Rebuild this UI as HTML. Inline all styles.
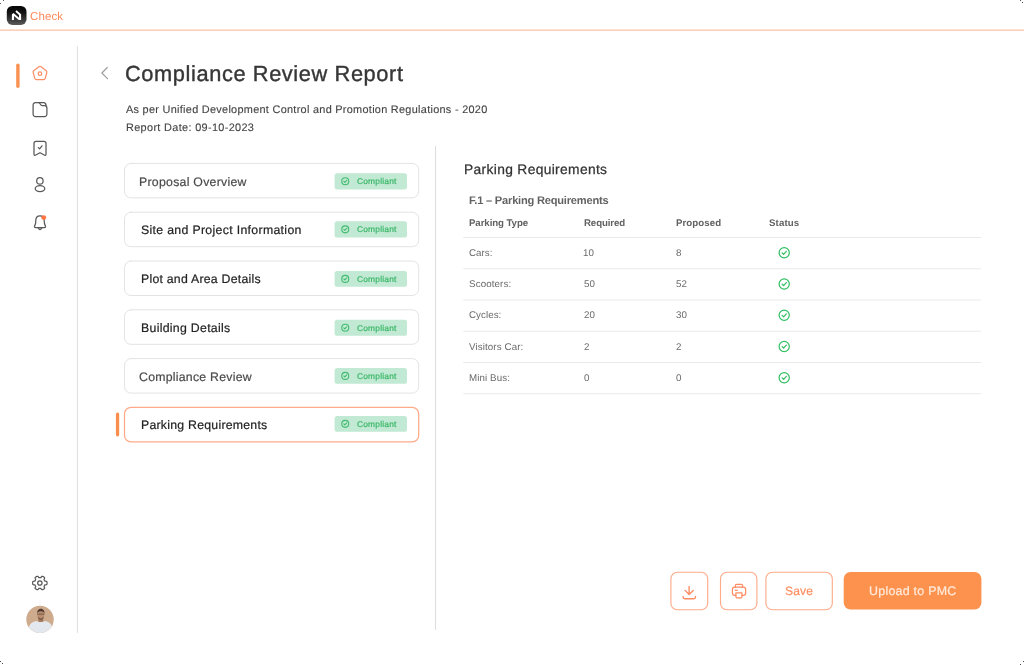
<!DOCTYPE html>
<html lang="en"><head><meta charset="utf-8"><title>Compliance Review Report</title>
<style>
*{box-sizing:border-box;margin:0;padding:0}
html,body{width:1024px;height:665px;overflow:hidden;background:#fff}
body{position:relative;font-family:"Liberation Sans",sans-serif}
.t{position:absolute;white-space:nowrap;font-family:"Liberation Sans",sans-serif}
.a{position:absolute}
svg{overflow:visible}
.t{will-change:transform;text-rendering:geometricPrecision}

#t_check{left:30.00px;top:12.00px;font-size:11.5px;line-height:11.5px;font-weight:400;color:#ff8a5c;letter-spacing:0.130px}
#t_title{left:125.30px;top:63.00px;font-size:21.8px;line-height:21.8px;font-weight:400;color:#363636;letter-spacing:0.604px;-webkit-text-stroke:0.38px #363636}
#t_sub1{left:125.65px;top:105.00px;font-size:10.9px;line-height:10.9px;font-weight:400;color:#444;letter-spacing:0.291px;-webkit-text-stroke:0.12px #444}
#t_sub2{left:125.65px;top:123.00px;font-size:10.9px;line-height:10.9px;font-weight:400;color:#444;letter-spacing:0.337px;-webkit-text-stroke:0.12px #444}
#t_l1{left:139.21px;top:176.00px;font-size:12.3px;line-height:12.3px;font-weight:400;color:#4a4a4a;letter-spacing:0.269px;-webkit-text-stroke:0.2px #4a4a4a}
#t_l2{left:141.04px;top:224.00px;font-size:12.3px;line-height:12.3px;font-weight:400;color:#222;letter-spacing:0.321px;-webkit-text-stroke:0.2px #222}
#t_l3{left:141.04px;top:273.00px;font-size:12.3px;line-height:12.3px;font-weight:400;color:#222;letter-spacing:0.238px;-webkit-text-stroke:0.2px #222}
#t_l4{left:141.38px;top:322.00px;font-size:12.3px;line-height:12.3px;font-weight:400;color:#222;letter-spacing:0.296px;-webkit-text-stroke:0.2px #222}
#t_l5{left:139.21px;top:371.00px;font-size:12.3px;line-height:12.3px;font-weight:400;color:#4a4a4a;letter-spacing:0.246px;-webkit-text-stroke:0.2px #4a4a4a}
#t_l6{left:141.38px;top:419.00px;font-size:12.3px;line-height:12.3px;font-weight:400;color:#222;letter-spacing:0.242px;-webkit-text-stroke:0.2px #222}
#t_h2{left:464.36px;top:163.00px;font-size:13.8px;line-height:13.8px;font-weight:400;color:#333;letter-spacing:0.341px;-webkit-text-stroke:0.25px #333}
#t_h3{left:469.00px;top:196.00px;font-size:11.1px;line-height:11.1px;font-weight:700;color:#626262;letter-spacing:-0.210px}
#t_c1{left:469.00px;top:219.00px;font-size:9.7px;line-height:9.7px;font-weight:700;color:#626262;letter-spacing:-0.093px}
#t_c2{left:584.00px;top:219.00px;font-size:9.7px;line-height:9.7px;font-weight:700;color:#626262;letter-spacing:-0.124px}
#t_c3{left:676.21px;top:219.00px;font-size:9.7px;line-height:9.7px;font-weight:700;color:#626262;letter-spacing:0.059px}
#t_c4{left:769.40px;top:219.00px;font-size:9.7px;line-height:9.7px;font-weight:700;color:#626262;letter-spacing:0.109px}
#t_save{left:785.30px;top:585.00px;font-size:12.1px;line-height:12.1px;font-weight:400;color:#ff8f63;letter-spacing:0.134px;-webkit-text-stroke:0.2px #ff8f63}
#t_upl{left:869.20px;top:585.00px;font-size:12.4px;line-height:12.4px;font-weight:400;color:#ffeadb;letter-spacing:0.270px;-webkit-text-stroke:0.2px #ffeadb}
#t_r0a{left:468.90px;top:249.00px;font-size:9.75px;line-height:9.75px;font-weight:400;color:#6a6a6a;letter-spacing:0.026px}
#t_r0b{left:583.00px;top:249.00px;font-size:9.75px;line-height:9.75px;font-weight:400;color:#6a6a6a;letter-spacing:0.000px}
#t_r0c{left:676.21px;top:249.00px;font-size:9.75px;line-height:9.75px;font-weight:400;color:#6a6a6a;letter-spacing:0.000px}
#t_r1a{left:468.90px;top:280.00px;font-size:9.75px;line-height:9.75px;font-weight:400;color:#6a6a6a;letter-spacing:0.127px}
#t_r1b{left:584.40px;top:280.00px;font-size:9.75px;line-height:9.75px;font-weight:400;color:#6a6a6a;letter-spacing:0.000px}
#t_r1c{left:676.21px;top:280.00px;font-size:9.75px;line-height:9.75px;font-weight:400;color:#6a6a6a;letter-spacing:0.000px}
#t_r2a{left:468.90px;top:311.00px;font-size:9.75px;line-height:9.75px;font-weight:400;color:#6a6a6a;letter-spacing:0.055px}
#t_r2b{left:584.40px;top:311.00px;font-size:9.75px;line-height:9.75px;font-weight:400;color:#6a6a6a;letter-spacing:0.000px}
#t_r2c{left:676.21px;top:311.00px;font-size:9.75px;line-height:9.75px;font-weight:400;color:#6a6a6a;letter-spacing:0.000px}
#t_r3a{left:468.90px;top:343.00px;font-size:9.75px;line-height:9.75px;font-weight:400;color:#6a6a6a;letter-spacing:0.109px}
#t_r3b{left:584.40px;top:343.00px;font-size:9.75px;line-height:9.75px;font-weight:400;color:#6a6a6a;letter-spacing:0.000px}
#t_r3c{left:676.21px;top:343.00px;font-size:9.75px;line-height:9.75px;font-weight:400;color:#6a6a6a;letter-spacing:0.000px}
#t_r4a{left:468.90px;top:374.00px;font-size:9.75px;line-height:9.75px;font-weight:400;color:#6a6a6a;letter-spacing:0.100px}
#t_r4b{left:584.40px;top:374.00px;font-size:9.75px;line-height:9.75px;font-weight:400;color:#6a6a6a;letter-spacing:0.000px}
#t_r4c{left:676.21px;top:374.00px;font-size:9.75px;line-height:9.75px;font-weight:400;color:#6a6a6a;letter-spacing:0.000px}
#t_b0{left:357.38px;top:177.00px;font-size:8.4px;line-height:8.4px;font-weight:400;color:#38b565;letter-spacing:0.205px;-webkit-text-stroke:0.18px #38b565}
#t_b1{left:357.38px;top:225.00px;font-size:8.4px;line-height:8.4px;font-weight:400;color:#38b565;letter-spacing:0.205px;-webkit-text-stroke:0.18px #38b565}
#t_b2{left:357.38px;top:275.00px;font-size:8.4px;line-height:8.4px;font-weight:400;color:#38b565;letter-spacing:0.205px;-webkit-text-stroke:0.18px #38b565}
#t_b3{left:357.38px;top:324.00px;font-size:8.4px;line-height:8.4px;font-weight:400;color:#38b565;letter-spacing:0.205px;-webkit-text-stroke:0.18px #38b565}
#t_b4{left:357.38px;top:372.00px;font-size:8.4px;line-height:8.4px;font-weight:400;color:#38b565;letter-spacing:0.205px;-webkit-text-stroke:0.18px #38b565}
#t_b5{left:357.38px;top:420.00px;font-size:8.4px;line-height:8.4px;font-weight:400;color:#38b565;letter-spacing:0.205px;-webkit-text-stroke:0.18px #38b565}
</style></head>
<body>
<svg class="a" style="left:0;top:0" width="1024" height="665" viewBox="0 0 1024 665" fill="none" stroke-linecap="round" stroke-linejoin="round">
<defs><linearGradient id="lg" x1="0" y1="0" x2="0" y2="1"><stop offset="0" stop-color="#030303"/><stop offset="0.4" stop-color="#161616"/><stop offset="1" stop-color="#5a5a5a"/></linearGradient><clipPath id="av"><circle cx="40" cy="619.4" r="13.7"/></clipPath></defs>
<g fill="#4a4a4a" stroke="none"><rect x="3" y="0" width="1" height="0.9"/><rect x="0" y="3" width="1" height="0.9"/><rect x="1020" y="0" width="1" height="0.9"/><rect x="1022" y="2" width="1" height="1"/><rect x="1023" y="661" width="1" height="1"/><rect x="1020" y="664" width="1" height="1"/><rect x="0" y="661" width="1" height="1"/><rect x="2" y="663" width="1" height="1"/></g>
<rect x="6.8" y="5.9" width="19.7" height="19" rx="5.6" fill="url(#lg)"/>
<path d="M11.9 19.9 V14.3 L13.5 13.0 L19.0 17.8 V15.0 L15.4 11.7 L16.6 10.2 L21.1 14.3 V19.9 H18.7 L14 15.9 V19.9 Z" fill="#fff"/>
<rect x="0" y="29.55" width="1024" height="1.15" fill="#fdbc9e"/>
<rect x="76.85" y="46" width="1.1" height="587" fill="#e3e0e0"/>
<rect x="16.2" y="63.5" width="3.4" height="24.5" rx="1.7" fill="#fb9150"/>
<g stroke="#ff8f66" stroke-width="1.25">
<path d="M38.9 66.8 Q40 66 41.1 66.8 L46 70.5 Q47.1 71.3 46.8 72.6 L45.3 78.2 Q44.9 79.5 43.5 79.5 H36.5 Q35.1 79.5 34.7 78.2 L33.2 72.6 Q32.9 71.3 34 70.5 Z"/>
<circle cx="39.95" cy="73.65" r="1.75"/></g>
<g stroke="#585858" stroke-width="1.25">
<path d="M35.6 102.6 H38.6 C40.3 102.6 40.2 105.6 42.2 105.6 H44.6 A2.3 2.3 0 0 1 46.9 107.9 V114.3 A2.3 2.3 0 0 1 44.6 116.6 H35.4 A2.3 2.3 0 0 1 33.1 114.3 V105 A2.4 2.4 0 0 1 35.6 102.6 Z"/>
<path d="M38.6 102.6 H43.6 C45.4 102.6 46 103.9 46 105.7"/>
<path d="M34 143.4 A2.1 2.1 0 0 1 36.1 141.3 H43.9 A2.1 2.1 0 0 1 46 143.4 V153.9 Q46 155.9 44.2 155 L40 152.7 L35.8 155 Q34 155.9 34 153.9 Z"/>
<path d="M38.3 147.6 L39.6 148.8 L42 145.8"/>
<circle cx="39.9" cy="180.9" r="3.2"/><ellipse cx="40" cy="188.6" rx="4.8" ry="3.1"/>
<path d="M40 215.9 C37 215.9 35.8 218 35.8 220.6 C35.8 223.2 35.5 224.6 34.8 225.6 C34.1 226.6 34.5 227.7 35.7 227.7 H44.3 C45.5 227.7 45.9 226.6 45.2 225.6 C44.5 224.6 44.2 223.2 44.2 220.6 C44.2 218 43 215.9 40 215.9 Z"/>
<path d="M38.3 228.2 Q40 230.9 41.7 228.2"/>
<path d="M47.05 583.00L47.05 583.19L47.04 583.38L47.03 583.56L47.01 583.75L46.98 583.94L46.94 584.12L46.88 584.30L46.78 584.47L46.59 584.62L46.26 584.72L45.80 584.76L45.36 584.79L45.05 584.84L44.87 584.93L44.76 585.03L44.68 585.15L44.61 585.27L44.54 585.39L44.47 585.51L44.41 585.63L44.34 585.75L44.26 585.87L44.19 585.99L44.13 586.11L44.07 586.24L44.03 586.39L44.05 586.58L44.15 586.88L44.35 587.27L44.54 587.69L44.62 588.03L44.59 588.27L44.49 588.44L44.37 588.58L44.23 588.70L44.08 588.82L43.93 588.93L43.77 589.04L43.61 589.14L43.45 589.24L43.29 589.33L43.12 589.41L42.95 589.50L42.78 589.57L42.60 589.64L42.42 589.70L42.24 589.74L42.04 589.74L41.82 589.65L41.57 589.41L41.30 589.03L41.05 588.66L40.86 588.43L40.69 588.31L40.54 588.27L40.40 588.26L40.26 588.25L40.13 588.26L39.99 588.26L39.85 588.26L39.71 588.26L39.57 588.26L39.44 588.25L39.30 588.26L39.16 588.27L39.01 588.31L38.84 588.43L38.65 588.66L38.40 589.03L38.13 589.41L37.88 589.65L37.66 589.74L37.46 589.74L37.28 589.70L37.10 589.64L36.92 589.57L36.75 589.50L36.58 589.41L36.41 589.33L36.25 589.24L36.09 589.14L35.93 589.04L35.77 588.93L35.62 588.82L35.47 588.70L35.33 588.58L35.21 588.44L35.11 588.27L35.08 588.03L35.16 587.69L35.35 587.27L35.55 586.88L35.65 586.58L35.67 586.39L35.63 586.24L35.57 586.11L35.51 585.99L35.44 585.87L35.36 585.75L35.29 585.63L35.23 585.51L35.16 585.39L35.09 585.27L35.02 585.15L34.94 585.03L34.83 584.93L34.65 584.84L34.34 584.79L33.90 584.76L33.44 584.72L33.11 584.62L32.92 584.47L32.82 584.30L32.76 584.12L32.72 583.94L32.69 583.75L32.67 583.56L32.66 583.38L32.65 583.19L32.65 583.00L32.65 582.81L32.66 582.62L32.67 582.44L32.69 582.25L32.72 582.06L32.76 581.88L32.82 581.70L32.92 581.53L33.11 581.38L33.44 581.28L33.90 581.24L34.34 581.21L34.65 581.16L34.83 581.07L34.94 580.97L35.02 580.85L35.09 580.73L35.16 580.61L35.23 580.49L35.29 580.37L35.36 580.25L35.44 580.13L35.51 580.01L35.57 579.89L35.63 579.76L35.67 579.61L35.65 579.42L35.55 579.12L35.35 578.73L35.16 578.31L35.08 577.97L35.11 577.73L35.21 577.56L35.33 577.42L35.47 577.30L35.62 577.18L35.77 577.07L35.93 576.96L36.09 576.86L36.25 576.76L36.41 576.67L36.58 576.59L36.75 576.50L36.92 576.43L37.10 576.36L37.28 576.30L37.46 576.26L37.66 576.26L37.88 576.35L38.13 576.59L38.40 576.97L38.65 577.34L38.84 577.57L39.01 577.69L39.16 577.73L39.30 577.74L39.44 577.75L39.57 577.74L39.71 577.74L39.85 577.74L39.99 577.74L40.13 577.74L40.26 577.75L40.40 577.74L40.54 577.73L40.69 577.69L40.86 577.57L41.05 577.34L41.30 576.97L41.57 576.59L41.82 576.35L42.04 576.26L42.24 576.26L42.42 576.30L42.60 576.36L42.78 576.43L42.95 576.50L43.12 576.59L43.29 576.67L43.45 576.76L43.61 576.86L43.77 576.96L43.93 577.07L44.08 577.18L44.23 577.30L44.37 577.42L44.49 577.56L44.59 577.73L44.62 577.97L44.54 578.31L44.35 578.73L44.15 579.12L44.05 579.42L44.03 579.61L44.07 579.76L44.13 579.89L44.19 580.01L44.26 580.13L44.34 580.25L44.41 580.37L44.47 580.49L44.54 580.61L44.61 580.73L44.68 580.85L44.76 580.97L44.87 581.07L45.05 581.16L45.36 581.21L45.80 581.24L46.26 581.28L46.59 581.38L46.78 581.53L46.88 581.70L46.94 581.88L46.98 582.06L47.01 582.25L47.03 582.44L47.04 582.62L47.05 582.81Z"/><circle cx="39.85" cy="583.0" r="2.2"/>
</g>
<circle cx="43.7" cy="217.6" r="2.45" fill="#ff7541"/>
<g clip-path="url(#av)">
<rect x="26" y="605" width="28" height="29" fill="#cfab8d"/>
<path d="M27.8 634 C27.8 625.6 30.6 622.4 36.2 621.1 Q40.6 622.9 45 621.1 C50.8 622.4 53 625.6 53 634 Z" fill="#e3e8ee"/>
<path d="M38.3 617.5 H43.3 V621.2 Q40.8 623 38.3 621.2 Z" fill="#a67b5f"/>
<ellipse cx="40.8" cy="614.4" rx="3.6" ry="4.9" fill="#b88d70"/>
<path d="M37.1 613.4 C36.5 607.3 45.1 607.3 44.5 613.4 C43.7 610.6 37.9 610.6 37.1 613.4 Z" fill="#4e3a2e"/>
<path d="M37.6 614.1 H44" stroke="#5a4538" stroke-width="0.7"/>
<path d="M37.6 616.6 Q40.8 620.2 44 616.6 Q43.6 619.6 40.8 620.2 Q38 619.6 37.6 616.6 Z" fill="#7b5b48"/>
</g>
<path d="M107.3 67.5 L101.9 73 L107.5 78.7" stroke="#9e9e9e" stroke-width="1.2"/>
<rect x="434.95" y="146" width="1.1" height="483.8" fill="#dedede"/>
<rect x="124.5" y="163.40" width="294.2" height="34.5" rx="6.5" stroke="#e3e3e3" stroke-width="1"/>
<rect x="334.6" y="173.15" width="72.4" height="16.25" rx="2.6" fill="#c1e9d4"/>
<g stroke="#41bb6e" stroke-width="1.1"><circle cx="345.25" cy="181.28" r="3.5"/><path d="M343.85 181.38 L344.85 182.33 L346.75 180.28"/></g>
<rect x="124.5" y="212.20" width="294.2" height="34.5" rx="6.5" stroke="#e3e3e3" stroke-width="1"/>
<rect x="334.6" y="221.15" width="72.4" height="16.40" rx="2.6" fill="#c1e9d4"/>
<g stroke="#41bb6e" stroke-width="1.1"><circle cx="345.25" cy="229.35" r="3.5"/><path d="M343.85 229.45 L344.85 230.40 L346.75 228.35"/></g>
<rect x="124.5" y="261.00" width="294.2" height="34.5" rx="6.5" stroke="#e3e3e3" stroke-width="1"/>
<rect x="334.6" y="271.00" width="72.4" height="15.80" rx="2.6" fill="#c1e9d4"/>
<g stroke="#41bb6e" stroke-width="1.1"><circle cx="345.25" cy="278.90" r="3.5"/><path d="M343.85 279.00 L344.85 279.95 L346.75 277.90"/></g>
<rect x="124.5" y="309.80" width="294.2" height="34.5" rx="6.5" stroke="#e3e3e3" stroke-width="1"/>
<rect x="334.6" y="319.70" width="72.4" height="16.10" rx="2.6" fill="#c1e9d4"/>
<g stroke="#41bb6e" stroke-width="1.1"><circle cx="345.25" cy="327.75" r="3.5"/><path d="M343.85 327.85 L344.85 328.80 L346.75 326.75"/></g>
<rect x="124.5" y="358.60" width="294.2" height="34.5" rx="6.5" stroke="#e3e3e3" stroke-width="1"/>
<rect x="334.6" y="368.00" width="72.4" height="15.80" rx="2.6" fill="#c1e9d4"/>
<g stroke="#41bb6e" stroke-width="1.1"><circle cx="345.25" cy="375.90" r="3.5"/><path d="M343.85 376.00 L344.85 376.95 L346.75 374.90"/></g>
<rect x="124.5" y="407.40" width="294.2" height="34.5" rx="6.5" stroke="#ffaa88" stroke-width="1.25"/>
<rect x="334.6" y="415.90" width="72.4" height="15.90" rx="2.6" fill="#c1e9d4"/>
<g stroke="#41bb6e" stroke-width="1.1"><circle cx="345.25" cy="423.85" r="3.5"/><path d="M343.85 423.95 L344.85 424.90 L346.75 422.85"/></g>
<rect x="115.9" y="412.4" width="3.3" height="24" rx="1.65" fill="#f98f4f"/>
<rect x="463.2" y="237.00" width="517.8" height="1" fill="#e9ebeb"/>
<rect x="463.2" y="268.25" width="517.8" height="1" fill="#e9ebeb"/>
<rect x="463.2" y="299.50" width="517.8" height="1" fill="#e9ebeb"/>
<rect x="463.2" y="330.75" width="517.8" height="1" fill="#e9ebeb"/>
<rect x="463.2" y="362.00" width="517.8" height="1" fill="#e9ebeb"/>
<rect x="463.2" y="393.25" width="517.8" height="1" fill="#e9ebeb"/>
<g stroke="#2fbe61" stroke-width="1.2"><circle cx="784.2" cy="252.70" r="5.1"/><path d="M782.1 252.90 L783.6 254.30 L786.3 251.30"/></g>
<g stroke="#2fbe61" stroke-width="1.2"><circle cx="784.2" cy="283.95" r="5.1"/><path d="M782.1 284.15 L783.6 285.55 L786.3 282.55"/></g>
<g stroke="#2fbe61" stroke-width="1.2"><circle cx="784.2" cy="315.20" r="5.1"/><path d="M782.1 315.40 L783.6 316.80 L786.3 313.80"/></g>
<g stroke="#2fbe61" stroke-width="1.2"><circle cx="784.2" cy="346.45" r="5.1"/><path d="M782.1 346.65 L783.6 348.05 L786.3 345.05"/></g>
<g stroke="#2fbe61" stroke-width="1.2"><circle cx="784.2" cy="377.70" r="5.1"/><path d="M782.1 377.90 L783.6 379.30 L786.3 376.30"/></g>
<rect x="670.9" y="572.2" width="36.8" height="37.5" rx="6.5" stroke="#ffab8a" stroke-width="1.15"/>
<rect x="720.5" y="572.2" width="36.4" height="37.5" rx="6.5" stroke="#ffab8a" stroke-width="1.15"/>
<rect x="765.9" y="572.2" width="66.4" height="37.5" rx="6.5" stroke="#ffab8a" stroke-width="1.15"/>
<rect x="843.7" y="572" width="137.7" height="37.6" rx="6.8" fill="#fc924e"/>
<g stroke="#ff8c62" stroke-width="1.35">
<path d="M689.1 586.5 V594.3 M685.1 590.4 L689.1 594.5 L693.3 590.4"/>
<path d="M683.1 596.3 V597 A1.7 1.7 0 0 0 684.8 598.7 H693.8 A1.7 1.7 0 0 0 695.5 597 V596.3"/>
</g><g stroke="#ff8c62" stroke-width="1.2">
<path d="M735.4 587.2 V585.6 A1.3 1.3 0 0 1 736.7 584.3 H741.3 A1.3 1.3 0 0 1 742.6 585.6 V587.2"/>
<path d="M735.9 595.3 H734.8 A2.4 2.4 0 0 1 732.4 592.9 V589.6 A2.4 2.4 0 0 1 734.8 587.2 H743.3 A2.4 2.4 0 0 1 745.7 589.6 V592.9 A2.4 2.4 0 0 1 743.3 595.3 H742"/>
<path d="M735.9 592.8 H742 V596.6 A1.3 1.3 0 0 1 740.7 597.9 H737.2 A1.3 1.3 0 0 1 735.9 596.6 Z"/>
<path d="M735.3 590.3 H737.3"/>
</g>
</svg>
<header class="topbar">
<span class="t" id="t_check">Check</span>
</header>
<div class="page-head">
<span class="t" id="t_title">Compliance Review Report</span>
<span class="t" id="t_sub1">As per Unified Development Control and Promotion Regulations - 2020</span>
<span class="t" id="t_sub2">Report Date: 09-10-2023</span>
</div>
<nav class="sections">
<div class="item"><span class="t" id="t_l1">Proposal Overview</span><span class="t" id="t_b0">Compliant</span></div>
<div class="item"><span class="t" id="t_l2">Site and Project Information</span><span class="t" id="t_b1">Compliant</span></div>
<div class="item"><span class="t" id="t_l3">Plot and Area Details</span><span class="t" id="t_b2">Compliant</span></div>
<div class="item"><span class="t" id="t_l4">Building Details</span><span class="t" id="t_b3">Compliant</span></div>
<div class="item"><span class="t" id="t_l5">Compliance Review</span><span class="t" id="t_b4">Compliant</span></div>
<div class="item"><span class="t" id="t_l6">Parking Requirements</span><span class="t" id="t_b5">Compliant</span></div>
</nav>
<main class="detail">
<span class="t" id="t_h2">Parking Requirements</span>
<span class="t" id="t_h3">F.1 – Parking Requirements</span>
<div class="thead"><span class="t" id="t_c1">Parking Type</span><span class="t" id="t_c2">Required</span><span class="t" id="t_c3">Proposed</span><span class="t" id="t_c4">Status</span></div>
<div class="trow"><span class="t" id="t_r0a">Cars:</span><span class="t" id="t_r0b">10</span><span class="t" id="t_r0c">8</span></div>
<div class="trow"><span class="t" id="t_r1a">Scooters:</span><span class="t" id="t_r1b">50</span><span class="t" id="t_r1c">52</span></div>
<div class="trow"><span class="t" id="t_r2a">Cycles:</span><span class="t" id="t_r2b">20</span><span class="t" id="t_r2c">30</span></div>
<div class="trow"><span class="t" id="t_r3a">Visitors Car:</span><span class="t" id="t_r3b">2</span><span class="t" id="t_r3c">2</span></div>
<div class="trow"><span class="t" id="t_r4a">Mini Bus:</span><span class="t" id="t_r4b">0</span><span class="t" id="t_r4c">0</span></div>
</main>
<footer class="actions">
<span class="t" id="t_save">Save</span>
<span class="t" id="t_upl">Upload to PMC</span>
</footer>
</body></html>
